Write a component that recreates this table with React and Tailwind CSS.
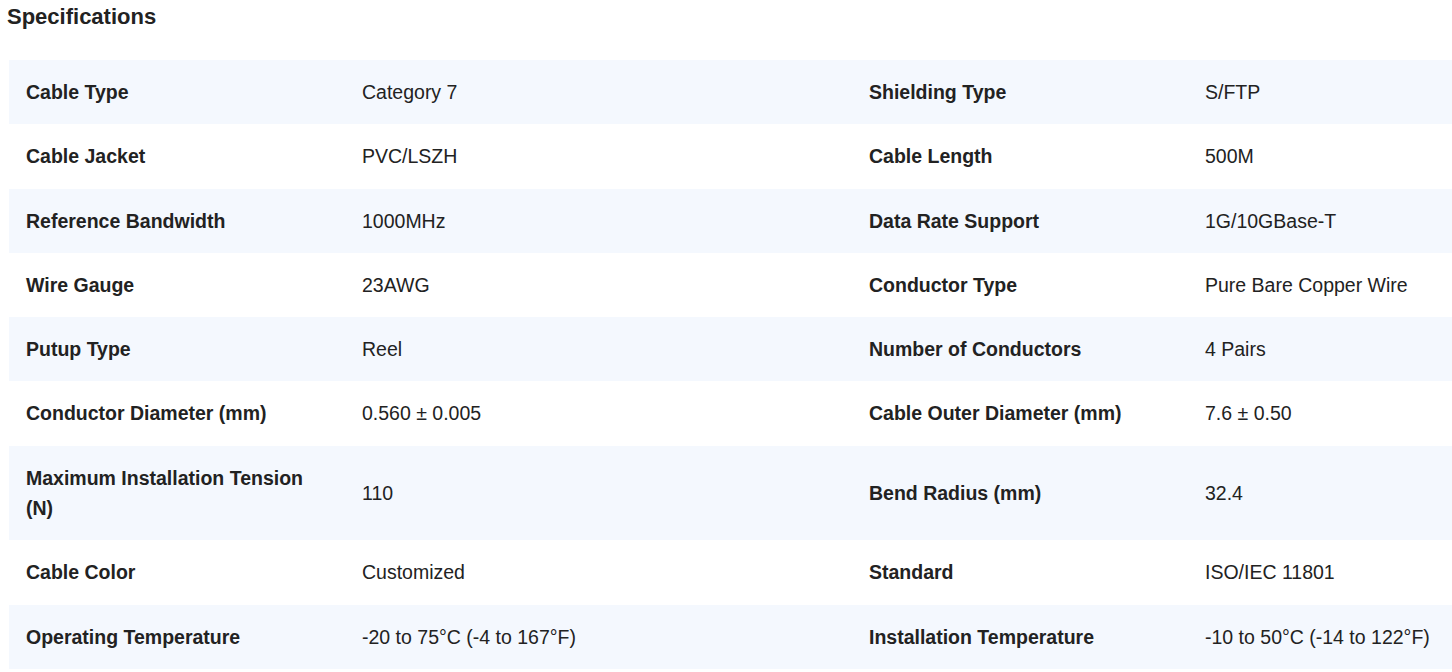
import React from "react";

const specs = [
	["Cable Type", "Category 7", "Shielding Type", "S/FTP"],
	["Cable Jacket", "PVC/LSZH", "Cable Length", "500M"],
	["Reference Bandwidth", "1000MHz", "Data Rate Support", "1G/10GBase-T"],
	["Wire Gauge", "23AWG", "Conductor Type", "Pure Bare Copper Wire"],
	["Putup Type", "Reel", "Number of Conductors", "4 Pairs"],
	["Conductor Diameter (mm)", "0.560 ± 0.005", "Cable Outer Diameter (mm)", "7.6 ± 0.50"],
	["Maximum Installation Tension (N)", "110", "Bend Radius (mm)", "32.4"],
	["Cable Color", "Customized", "Standard", "ISO/IEC 11801"],
	["Operating Temperature", "-20 to 75°C (-4 to 167°F)", "Installation Temperature", "-10 to 50°C (-14 to 122°F)"],
];

const SpecRow = ({ row, index }) => {
	const [l1, v1, l2, v2] = row;
	return (
		<tr className={index % 2 === 0 ? "bg-[#f4f8fe]" : "bg-white"}>
			<td className="px-[17px] py-[17px] font-bold align-middle">{l1}</td>
			<td className="px-[17px] py-[17px] align-middle">{v1}</td>
			<td className="px-[17px] py-[17px] font-bold align-middle">{l2}</td>
			<td className="px-[17px] py-[17px] align-middle">{v2}</td>
		</tr>
	);
};

export default function App() {
	return (
		<div
			className="bg-white text-[#222] min-h-[672px]"
			style={{ fontFamily: '"Liberation Sans", Arial, sans-serif' }}
		>
			<h3 className="pl-[7px] pt-0 text-[22px] font-bold leading-normal h-[60px]">
				Specifications
			</h3>
			<div className="pl-[9px]">
				<table className="w-full table-fixed border-collapse text-[19.5px] leading-[30.3px]">
					<colgroup>
						<col className="w-[336px]" />
						<col className="w-[507px]" />
						<col className="w-[336px]" />
						<col />
					</colgroup>
					<tbody>
						{specs.map((row, i) => (
							<SpecRow key={row[0]} row={row} index={i} />
						))}
					</tbody>
				</table>
			</div>
		</div>
	);
}
